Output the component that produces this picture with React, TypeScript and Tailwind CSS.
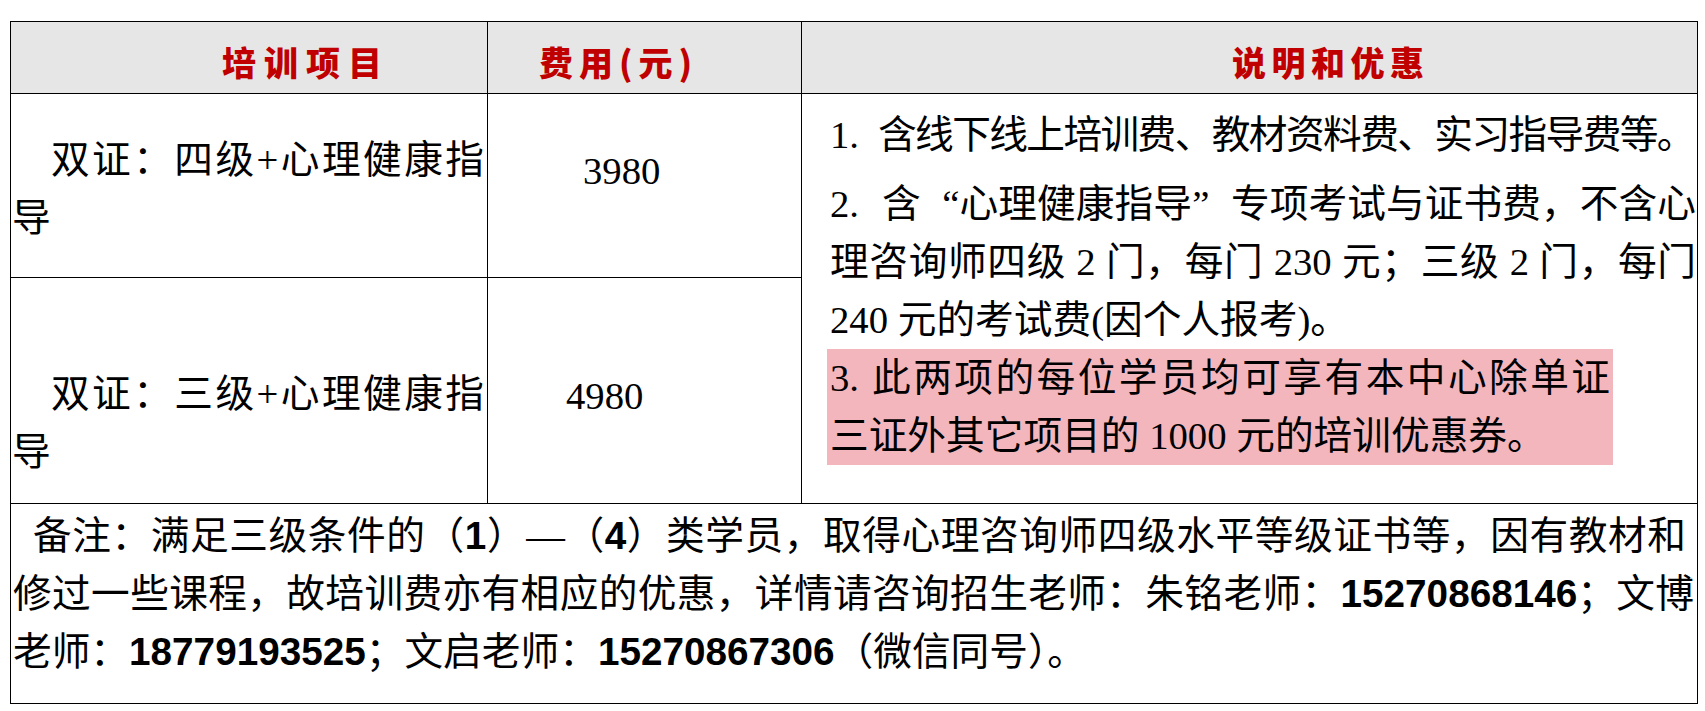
const body = "font-['Liberation_Serif','Noto_Sans_CJK_SC',serif] text-[38.7px] leading-[58px] text-black"
const head = "font-['Noto_Sans_CJK_SC',sans-serif] font-black text-[34px] leading-[40px] text-[#c00000]"
const cell = "border-r border-b border-black"

function Just({ children, className = "" }: { children: React.ReactNode; className?: string }) {
  return <div className={"text-justify [text-align-last:justify] " + className}>{children}</div>
}

function B({ children }: { children: React.ReactNode }) {
  return <b className="font-['Liberation_Sans',sans-serif] font-bold">{children}</b>
}

export default function App() {
  return (
    <div className="h-[711px] w-[1705px] overflow-hidden bg-white pl-[10px] pt-[21px]">
      <div
        className={
          "grid w-fit grid-cols-[477px_314px_896px] grid-rows-[72px_184px_226px_200px] border-l border-t border-black " +
          body
        }
      >
        {/* header */}
        <div className={cell + " bg-[#e7e6e6] pl-[211px] pt-[20px]"}>
          <div className={head + " tracking-[8px]"}>培训项目</div>
        </div>
        <div className={cell + " bg-[#e7e6e6] pl-[51px] pt-[20px]"}>
          <div className={head + " tracking-[6px]"}>费用(元)</div>
        </div>
        <div className={cell + " bg-[#e7e6e6] pl-[430px] pt-[20px]"}>
          <div className={head + " tracking-[5.5px]"}>说明和优惠</div>
        </div>

        {/* row 1 */}
        <div className={cell + " pl-[1px] pt-[37px]"}>
          <Just className="pl-[39px] pr-[3px]">双证：四级+心理健康指</Just>
          <div>导</div>
        </div>
        <div className={cell + " pl-[95px] pt-[48px]"}>3980</div>

        {/* notes, spans both rows */}
        <div className={cell + " row-span-2 pl-[25px] pr-[1px] pt-[12px]"}>
          <div className="flex whitespace-nowrap pl-[3px]">
            <span className="w-[48px] shrink-0">1.</span>
            <span className="tracking-[-1.6px]">含线下线上培训费、教材资料费、实习指导费等。</span>
          </div>
          <div className="mt-[11px] pl-[3px]">
            <div className="flex">
              <span className="w-[52px] shrink-0">2.</span>
              <Just className="flex-1">
                含<span className="inline-block w-[1em] text-right [text-align-last:right]">“</span>心理健康指导
                <span className="inline-block w-[1em] text-left [text-align-last:left]">”</span>专项考试与证书费，不含心
              </Just>
            </div>
            <Just>理咨询师四级 2 门，每门 230 元；三级 2 门，每门</Just>
            <div>240 元的考试费(因个人报考)。</div>
          </div>
          <div className="w-[786px] bg-[#f3b6bc] px-[3px]">
            <div className="flex">
              <span className="w-[42px] shrink-0">3.</span>
              <Just className="flex-1">此两项的每位学员均可享有本中心除单证</Just>
            </div>
            <div>三证外其它项目的 1000 元的培训优惠券。</div>
          </div>
        </div>

        {/* row 2 */}
        <div className={cell + " pl-[1px] pt-[87px]"}>
          <Just className="pl-[39px] pr-[3px]">双证：三级+心理健康指</Just>
          <div>导</div>
        </div>
        <div className={cell + " pl-[78px] pt-[89px]"}>4980</div>

        {/* footer */}
        <div className={cell + " col-span-3 pl-[2px] pr-[3px] pt-[3px]"}>
          <Just className="pl-[20px] pr-[8px]">
            备注：满足三级条件的（<B>1</B>）—（<B>4</B>）类学员，取得心理咨询师四级水平等级证书等，因有教材和
          </Just>
          <Just>
            修过一些课程，故培训费亦有相应的优惠，详情请咨询招生老师：朱铭老师：<B>15270868146</B>；文博
          </Just>
          <div>
            老师：<B>18779193525</B>；文启老师：<B>15270867306</B>（微信同号）。
          </div>
        </div>
      </div>
    </div>
  )
}
